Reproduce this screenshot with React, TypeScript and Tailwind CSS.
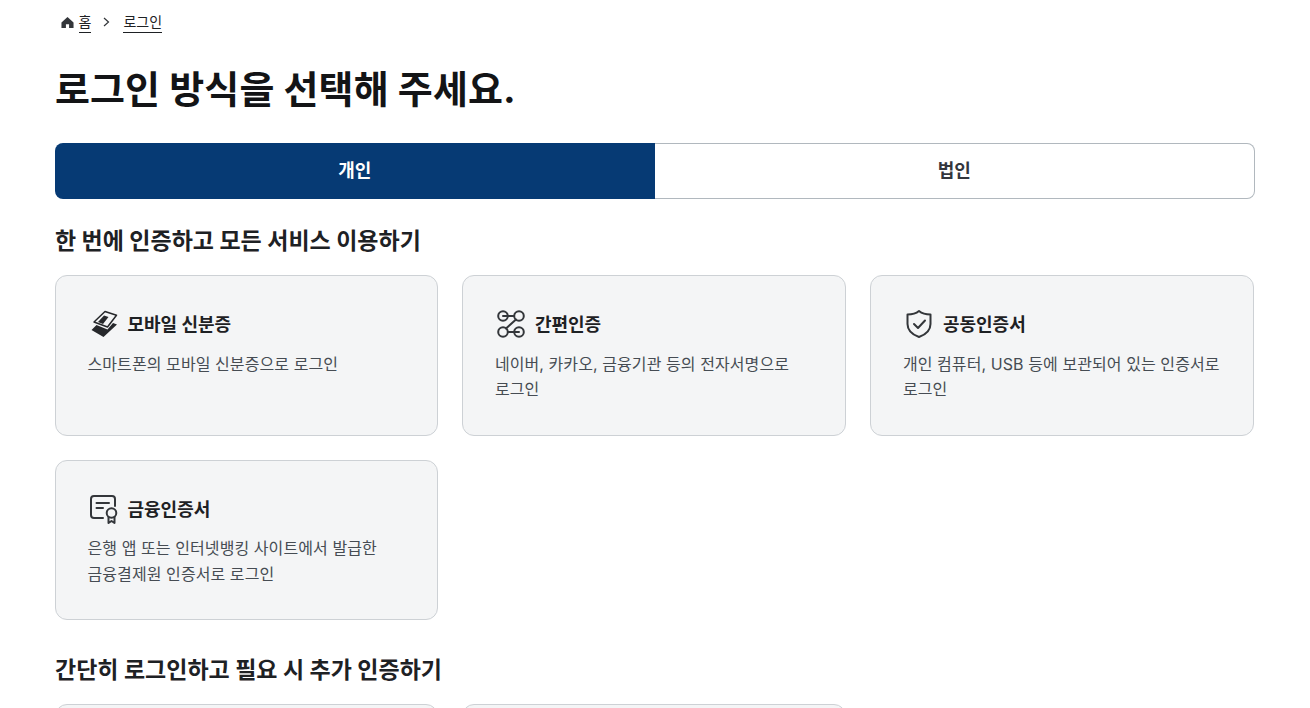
import { ReactNode } from 'react';

function MobileIcon() {
  return (
    <svg width="32" height="32" viewBox="0 0 32 32" fill="none" stroke="#26282b" strokeWidth="1.5" strokeLinejoin="round">
      <path d="M17 3.5 L28.5 7.3 L19.5 19 L6 14 Z" />
      <path d="M10 14 L16 7.5 L20.5 9 L15 16 Z" fill="#26282b" stroke="none" />
      <path d="M3.5 22 L8.5 17 L19.5 21.5 L25 15 L29 16.5 L15.5 29 Z" fill="#26282b" stroke="none" />
    </svg>
  );
}

function LinkIcon() {
  return (
    <svg width="32" height="32" viewBox="0 0 32 32" fill="none" stroke="#33363a" strokeWidth="2" strokeLinecap="round">
      <circle cx="8" cy="8" r="4.8" />
      <circle cx="24" cy="8" r="4.8" />
      <circle cx="8" cy="24" r="4.8" />
      <circle cx="24" cy="24" r="4.8" />
      <path d="M8 8 H19 M13 24 H24 M21 11.5 L11 20.5" />
    </svg>
  );
}

function ShieldIcon() {
  return (
    <svg width="32" height="32" viewBox="0 0 32 32" fill="none" stroke="#33363a" strokeWidth="2" strokeLinecap="round" strokeLinejoin="round">
      <path d="M16 3 C19 5.5 23 6.5 27.5 6.5 V16 C27.5 22 23 26.5 16 29 C9 26.5 4.5 22 4.5 16 V6.5 C9 6.5 13 5.5 16 3 Z" />
      <path d="M11 16 L15 20 L22 12.5" />
    </svg>
  );
}

function CertIcon() {
  return (
    <svg width="32" height="32" viewBox="0 0 32 32" fill="none" stroke="#33363a" strokeWidth="2" strokeLinecap="round" strokeLinejoin="round">
      <path d="M15 25 H6 A3 3 0 0 1 3 22 V6 A3 3 0 0 1 6 3 H24 A3 3 0 0 1 27 6 V13" />
      <path d="M8.5 10 H21 M8.5 15 H15" />
      <circle cx="23.5" cy="20" r="4.8" />
      <path d="M20.5 24 V30 L23.5 28 L26.5 30 V24" />
    </svg>
  );
}

function Card({ icon, title, desc }: { icon: ReactNode; title: string; desc: ReactNode }) {
  return (
    <a className="block h-[160.5px] rounded-xl border border-[#cdd1d5] bg-[#f4f5f6] px-[31.5px] pt-[32px]">
      <div className="flex items-center gap-2">
        {icon}
        <span className="pt-[2px] text-[18px] font-bold leading-[24px] text-[#1e2124]">{title}</span>
      </div>
      <p className="mt-[11.6px] break-keep text-[16px] leading-[25.6px] tracking-[0.08px] text-[#464c53]">{desc}</p>
    </a>
  );
}

export default function App() {
  return (
    <div className="h-[708px] overflow-hidden bg-white font-['Inter','Noto_Sans_CJK_KR',sans-serif] text-[#1e2124]">
      <div className="mx-auto w-[1200px]">
        {/* Breadcrumb */}
        <nav className="flex h-[44px] items-center pl-[5.5px] text-[14px]">
          <svg width="13" height="13" viewBox="0 0 14 14" fill="#33363a">
            <path d="M7 1 L13.5 7 V13 H8.7 V9 H5.3 V13 H.5 V7 Z" />
          </svg>
          <a className="ml-[5px] border-b border-[#1e2124] leading-[20px]">홈</a>
          <svg className="ml-[9px] mr-[11px]" width="12" height="12" viewBox="0 0 12 12" fill="none" stroke="#33363a" strokeWidth="1.2">
            <path d="M4 2 L8.5 6 L4 10" />
          </svg>
          <a className="border-b border-[#1e2124] leading-[20px]">로그인</a>
        </nav>

        <h1 className="mt-[20px] text-[38px] font-bold leading-[50px] tracking-[0.1px] text-[#131416]">로그인 방식을 선택해 주세요.</h1>

        {/* Tabs */}
        <div className="mt-[29px] flex h-[56px]">
          <button className="flex-1 rounded-l-lg bg-[#063a74] pb-[2px] text-[18px] font-bold text-white">개인</button>
          <button className="flex-1 rounded-r-lg border border-l-0 border-[#b1b8be] bg-white pb-[2px] text-[18px] font-bold text-[#33363d]">법인</button>
        </div>

        <h2 className="mt-[25px] text-[23px] font-bold leading-[34px] text-[#1e2124]">한 번에 인증하고 모든 서비스 이용하기</h2>

        <div className="mt-[17px] grid grid-cols-[383.4px_384px_384px] gap-6">
          <Card icon={<MobileIcon />} title="모바일 신분증" desc="스마트폰의 모바일 신분증으로 로그인" />
          <Card icon={<LinkIcon />} title="간편인증" desc="네이버, 카카오, 금융기관 등의 전자서명으로 로그인" />
          <Card icon={<ShieldIcon />} title="공동인증서" desc="개인 컴퓨터, USB 등에 보관되어 있는 인증서로 로그인" />
          <Card
            icon={<CertIcon />}
            title="금융인증서"
            desc={<>은행 앱 또는 인터넷뱅킹 사이트에서 발급한<br />금융결제원 인증서로 로그인</>}
          />
        </div>

        <h2 className="mt-[33px] text-[23px] font-bold leading-[34px] text-[#1e2124]">간단히 로그인하고 필요 시 추가 인증하기</h2>

        <div className="mt-[17px] grid grid-cols-[383.4px_384px_384px] gap-6">
          <div className="h-[160px] rounded-xl border border-[#cdd1d5] bg-[#f4f5f6]" />
          <div className="h-[160px] rounded-xl border border-[#cdd1d5] bg-[#f4f5f6]" />
        </div>
      </div>
    </div>
  );
}
